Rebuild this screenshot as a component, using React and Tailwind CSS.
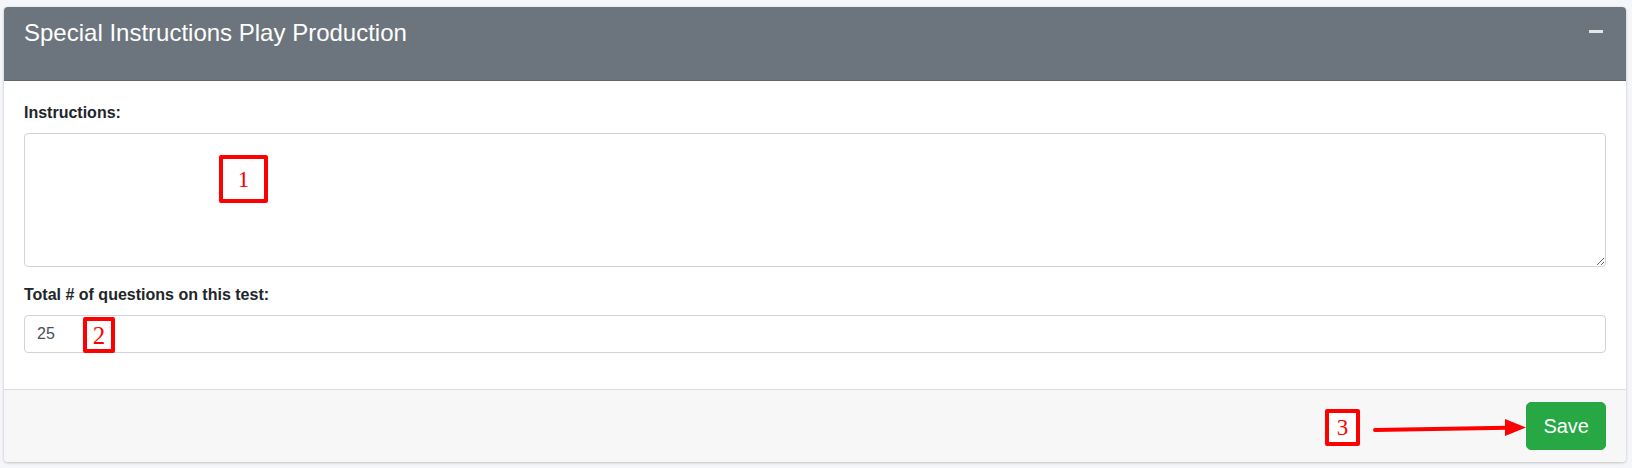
export default function App() {
  const font = { fontFamily: '"Liberation Sans", Arial, sans-serif' };
  const serif = { fontFamily: '"Liberation Serif", "Times New Roman", serif' };
  return (
    <div className="min-h-screen bg-[#f4f6f9] pt-[7px] pl-[4px] pr-[6px] pb-[6px]" style={font}>
      <div className="relative rounded-[4px] bg-white shadow-[0_0_1px_rgba(0,0,0,0.125),0_1px_3px_rgba(0,0,0,0.2)]">
        {/* Header */}
        <div className="flex h-[74px] items-start justify-between rounded-t-[4px] border-b border-[#5f666d] bg-[#6c757d] pl-5 pr-[23px] pt-3">
          <h3 className="text-[24px] leading-[1.2] font-normal text-white">Special Instructions Play Production</h3>
          <div className="mt-[11px] h-[3px] w-[14px] bg-[#e4e6e8]" />
        </div>

        {/* Body */}
        <div className="px-5 pt-5 pb-5">
          <div className="mb-4">
            <label className="mb-2 block text-[16px] leading-6 font-bold text-[#212529]">Instructions:</label>
            <textarea className="block h-[134px] w-full rounded-[4px] border border-[#ced4da] bg-white px-3 py-1.5 text-[16px] text-[#495057] outline-none" />
          </div>
          <div className="mb-4">
            <label className="mb-2 block text-[16px] leading-6 font-bold text-[#212529]">Total # of questions on this test:</label>
            <input
              className="block h-[38px] w-full rounded-[4px] border border-[#ced4da] bg-white px-3 text-[16px] text-[#495057] outline-none"
              defaultValue="25"
            />
          </div>
        </div>

        {/* Footer */}
        <div className="flex justify-end rounded-b-[4px] border-t border-[#dcdcdc] bg-[#f7f7f7] px-5 py-3">
          <button className="rounded-[5px] border border-[#28a745] bg-[#28a745] px-4 py-2 text-[20px] leading-[1.5] text-white">Save</button>
        </div>

        {/* Annotations */}
        <div className="absolute left-[215px] top-[148px] flex h-[48px] w-[49px] items-center justify-center rounded-[2px] border-4 border-[#ff0000] bg-white">
          <span className="text-[23px] leading-none text-[#ff0000]" style={serif}>1</span>
        </div>
        <div className="absolute left-[79px] top-[310px] flex h-[36px] w-[32px] items-center justify-center rounded-[2px] border-4 border-[#ff0000] bg-white">
          <span className="text-[25px] leading-none text-[#ff0000]" style={serif}>2</span>
        </div>
        <div className="absolute left-[1321px] top-[402px] flex h-[37px] w-[35px] items-center justify-center rounded-[2px] border-4 border-[#ff0000] bg-white">
          <span className="text-[23px] leading-none text-[#ff0000]" style={serif}>3</span>
        </div>
        <svg className="absolute left-[1361px] top-[408px]" width="165" height="25" viewBox="0 0 165 25">
          <line x1="10" y1="15" x2="142" y2="12.8" stroke="#ff0000" strokeWidth="4" strokeLinecap="round" />
          <polygon points="140,4 161,12.5 140,21" fill="#ff0000" />
        </svg>
      </div>
    </div>
  );
}
